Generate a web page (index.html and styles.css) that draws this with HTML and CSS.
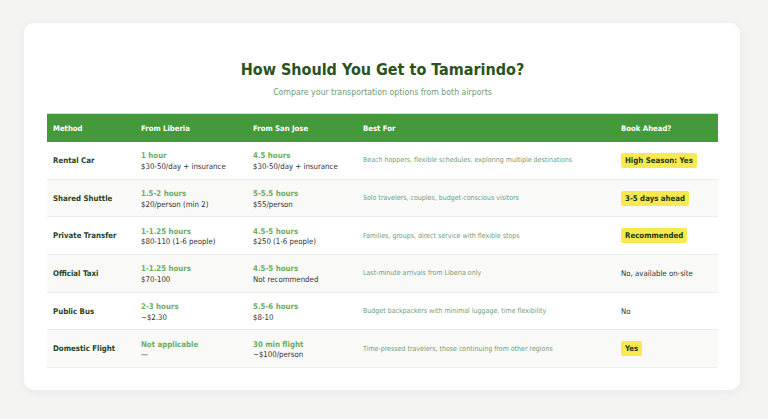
FILE: index.html
```html
<!DOCTYPE html>
<html>
<head>
<meta charset="utf-8">
<link rel="stylesheet" href="styles.css">
</head>
<body>
<div class="card">
  <h1 class="title">How Should You Get to Tamarindo?</h1>
  <p class="subtitle">Compare your transportation options from both airports</p>
  <table class="tbl">
    <thead>
      <tr>
        <th class="c1">Method</th>
        <th class="c2">From Liberia</th>
        <th class="c3">From San Jose</th>
        <th class="c4">Best For</th>
        <th class="c5">Book Ahead?</th>
      </tr>
    </thead>
    <tbody>
      <tr>
        <td class="method">Rental Car</td>
        <td class="time"><span class="dur">1 hour</span><span class="price">$30-50/day + insurance</span></td>
        <td class="time"><span class="dur">4.5 hours</span><span class="price">$30-50/day + insurance</span></td>
        <td class="best">Beach hoppers, flexible schedules, exploring multiple destinations</td>
        <td><span class="badge">High Season: Yes</span></td>
      </tr>
      <tr>
        <td class="method">Shared Shuttle</td>
        <td class="time"><span class="dur">1.5-2 hours</span><span class="price">$20/person (min 2)</span></td>
        <td class="time"><span class="dur">5-5.5 hours</span><span class="price">$55/person</span></td>
        <td class="best">Solo travelers, couples, budget-conscious visitors</td>
        <td><span class="badge">3-5 days ahead</span></td>
      </tr>
      <tr>
        <td class="method">Private Transfer</td>
        <td class="time"><span class="dur">1-1.25 hours</span><span class="price">$80-110 (1-6 people)</span></td>
        <td class="time"><span class="dur">4.5-5 hours</span><span class="price">$250 (1-6 people)</span></td>
        <td class="best">Families, groups, direct service with flexible stops</td>
        <td><span class="badge">Recommended</span></td>
      </tr>
      <tr>
        <td class="method">Official Taxi</td>
        <td class="time"><span class="dur">1-1.25 hours</span><span class="price">$70-100</span></td>
        <td class="time"><span class="dur">4.5-5 hours</span><span class="price">Not recommended</span></td>
        <td class="best">Last-minute arrivals from Liberia only</td>
        <td class="plain">No, available on-site</td>
      </tr>
      <tr>
        <td class="method">Public Bus</td>
        <td class="time"><span class="dur">2-3 hours</span><span class="price">~$2.30</span></td>
        <td class="time"><span class="dur">5.5-6 hours</span><span class="price">$8-10</span></td>
        <td class="best">Budget backpackers with minimal luggage, time flexibility</td>
        <td class="plain">No</td>
      </tr>
      <tr>
        <td class="method">Domestic Flight</td>
        <td class="time"><span class="dur">Not applicable</span><span class="price">—</span></td>
        <td class="time"><span class="dur">30 min flight</span><span class="price">~$100/person</span></td>
        <td class="best">Time-pressed travelers, those continuing from other regions</td>
        <td><span class="badge">Yes</span></td>
      </tr>
    </tbody>
  </table>
</div>
</body>
</html>
```

FILE: styles.css
```css
html, body {
  margin: 0;
  padding: 0;
}
body {
  background: #f4f5f3;
  font-family: "DejaVu Sans Condensed", "DejaVu Sans", sans-serif;
  font-stretch: condensed;
  padding: 23px 28px 30px 24px;
}
.card {
  background: #ffffff;
  border-radius: 10px;
  box-shadow: 0 2px 10px rgba(60, 100, 60, 0.08);
  padding: 37px 22px 22px 23px;
}
.title {
  margin: 0;
  text-align: center;
  font-size: 16px;
  font-weight: bold;
  color: #2b5322;
  line-height: 20px;
}
.subtitle {
  margin: 6px 0 15px;
  text-align: center;
  font-size: 8.7px;
  color: #6d9d72;
  line-height: 12px;
}
.tbl {
  width: 100%;
  border-collapse: collapse;
  table-layout: fixed;
}
.tbl th {
  background: #449a3b;
  color: #ffffff;
  font-size: 7.7px;
  font-weight: bold;
  text-align: left;
  height: 28px;
  padding: 0 6px;
  border-top: 1px solid #cfe3cb;
}
.c1 { width: 76px; }
.c2 { width: 100px; }
.c3 { width: 98px; }
.c4 { width: 246px; }
.tbl td {
  height: 33.7px;
  padding: 0 6px;
  border-bottom: 1px solid #ececea;
  vertical-align: middle;
  font-size: 7.8px;
  color: #333;
}
.tbl td.time {
  padding-top: 3px;
}
.tbl tbody tr:nth-child(even) td {
  background: #f9f9f7;
}
.method {
  font-weight: bold;
  color: #27431f !important;
}
.dur {
  display: block;
  color: #6cae5f;
  font-weight: bold;
  line-height: 10.5px;
}
.price {
  display: block;
  color: #333;
  line-height: 10.5px;
}
.best {
  color: #6f9e7c !important;
  font-size: 7px !important;
}
.plain {
  color: #333 !important;
}
.badge {
  display: inline-block;
  background: #f7e94e;
  color: #1f3a18;
  font-weight: bold;
  padding: 2px 4px;
  border-radius: 2px;
  line-height: 11px;
}
```
